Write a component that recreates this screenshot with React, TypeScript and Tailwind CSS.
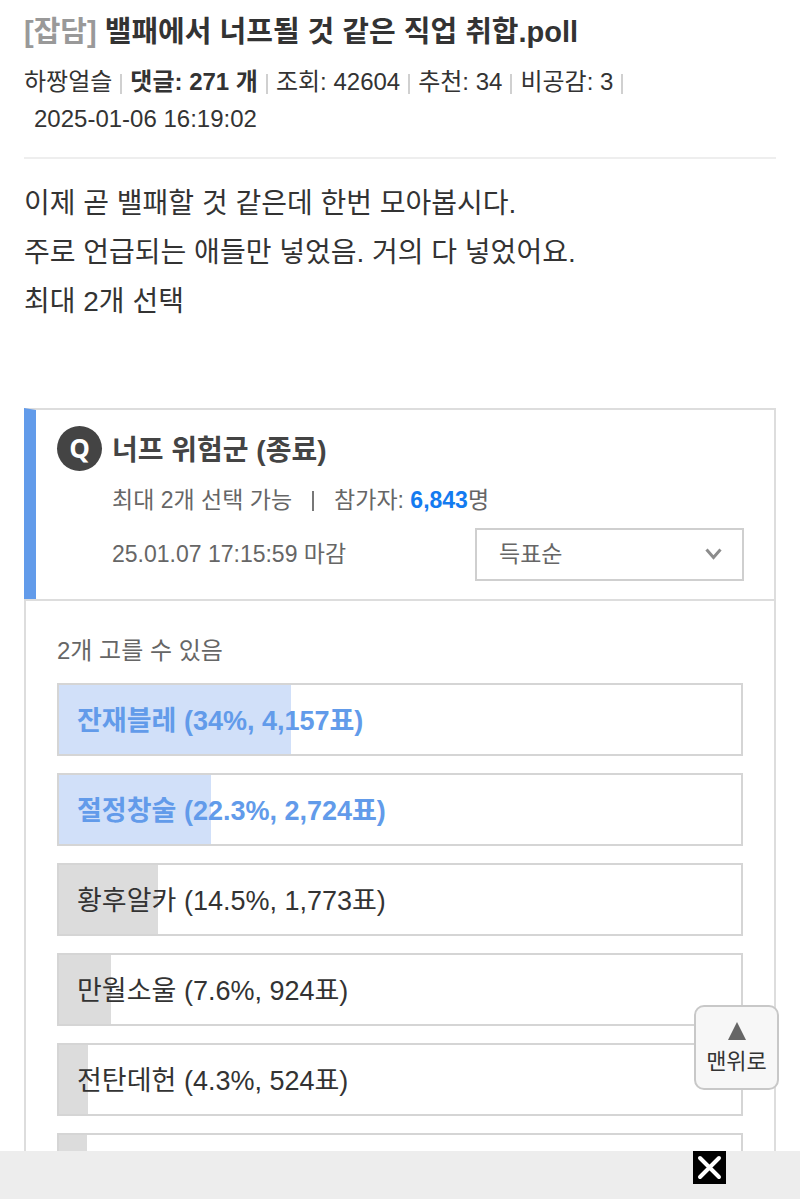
import React, { useState } from 'react';

interface PollOption {
    name: string;
    percent: number;
    votes: string;
    winner?: boolean;
}

const options: PollOption[] = [
    { name: '잔재블레', percent: 34, votes: '4,157', winner: true },
    { name: '절정창술', percent: 22.3, votes: '2,724', winner: true },
    { name: '황후알카', percent: 14.5, votes: '1,773' },
    { name: '만월소울', percent: 7.6, votes: '924' },
    { name: '전탄데헌', percent: 4.3, votes: '524' },
    { name: '', percent: 4.1, votes: '' },
];

function Divider() {
    return <span className="w-[2px] h-5 mx-2 mt-1 bg-[#d0d0d0]" />;
}

function PostHeader() {
    return (
        <header className="border-b-2 border-[#eeeeee] pt-[9px] pb-5">
            <h1 className="text-[29px] leading-[46px] font-bold">
                <span className="text-[#999999]">[잡담]</span> 밸패에서 너프될 것 같은 직업 취합.poll
            </h1>
            <div className="mt-2 flex flex-wrap items-center text-[24px] leading-[37px]">
                <span>하짱얼슬</span>
                <Divider />
                <strong className="font-bold">댓글: 271 개</strong>
                <Divider />
                <span>조회: 42604</span>
                <Divider />
                <span>추천: 34</span>
                <Divider />
                <span>비공감: 3</span>
                <Divider />
                <time className="w-full pl-[10px]">2025-01-06 16:19:02</time>
            </div>
        </header>
    );
}

function PollRow({ option }: { option: PollOption }) {
    return (
        <li className="relative h-[73px] border-2 border-[#d5d5d5] bg-white">
            <div
                className={option.winner ? 'absolute inset-y-0 left-0 bg-[#d1e0f9]' : 'absolute inset-y-0 left-0 bg-[#dcdcdc]'}
                style={{ width: `${option.percent}%` }}
            />
            {option.name && (
                <span
                    className={
                        option.winner
                            ? 'relative flex h-full items-center pt-1 pl-[18px] text-[27px] font-bold text-[#629bea]'
                            : 'relative flex h-full items-center pt-1 pl-[18px] text-[27px] text-[#333333]'
                    }
                >
                    {option.name} ({option.percent}%, {option.votes}표)
                </span>
            )}
        </li>
    );
}

function Poll() {
    const [order, setOrder] = useState('votes');

    return (
        <section className="mt-[82px]">
            <div className="border-t-2 border-r-2 border-l-[12px] border-t-[#dddddd] border-r-[#dddddd] border-l-[#629bea] pt-[14px] pr-[30px] pb-[18px] pl-[21px]">
                <div className="flex items-center gap-[10px]">
                    <span className="flex h-[45px] w-[45px] items-center justify-center rounded-full bg-[#444444] font-['Open_Sans',sans-serif] text-[26px] font-bold text-white">
                        Q
                    </span>
                    <h2 className="pt-1 text-[28px] leading-[45px] font-bold text-[#444444]">너프 위험군 (종료)</h2>
                </div>
                <div className="mt-[9px] flex items-center pl-[55px] text-[23px] leading-[37px] text-[#666666]">
                    <span>최대 2개 선택 가능</span>
                    <span className="mx-5 h-5 w-[2px] bg-[#777777]" />
                    <span>
                        참가자: <strong className="font-bold text-[#147bf0]">6,843</strong>명
                    </span>
                </div>
                <div className="mt-[9px] flex items-center justify-between pl-[55px] text-[23px] text-[#666666]">
                    <span>25.01.07 17:15:59 마감</span>
                    <div className="relative w-[269px]">
                        <select
                            aria-label="정렬"
                            value={order}
                            onChange={(e) => setOrder(e.target.value)}
                            className="block h-[53px] w-full appearance-none rounded-none border-2 border-[#cfcfcf] bg-white pl-[22px] text-[23px] leading-[37px] text-[#666666]"
                        >
                            <option value="votes">득표순</option>
                            <option value="default">등록순</option>
                        </select>
                        <svg
                            className="pointer-events-none absolute top-5 right-[22px] h-3 w-[17px]"
                            viewBox="0 0 17 12"
                            fill="none"
                            stroke="#8c8c8c"
                            strokeWidth="3"
                        >
                            <path d="M1.5 1.5 8.5 9.5 15.5 1.5" />
                        </svg>
                    </div>
                </div>
            </div>
            <div className="border-2 border-[#dddddd] px-[31px] pt-[31px] pb-8">
                <p className="text-[24px] leading-[37px] text-[#666666]">2개 고를 수 있음</p>
                <ul className="mt-[14px] flex flex-col gap-[17px]">
                    {options.map((option) => (
                        <PollRow key={option.percent} option={option} />
                    ))}
                </ul>
            </div>
        </section>
    );
}

export default function App() {
    return (
        <div className="relative flex h-screen flex-col bg-white font-['Liberation_Sans','Noto_Sans_CJK_KR',sans-serif] text-[#333333]">
            <main className="min-h-0 flex-1 overflow-hidden px-6">
                <PostHeader />
                <div className="mt-5 text-[28px] leading-[49px]">
                    <p>이제 곧 밸패할 것 같은데 한번 모아봅시다.</p>
                    <p>주로 언급되는 애들만 넣었음. 거의 다 넣었어요.</p>
                    <p>최대 2개 선택</p>
                </div>
                <Poll />
            </main>

            <footer className="flex h-12 shrink-0 items-start justify-end bg-[#ededed] pr-[74px]">
                <button type="button" aria-label="닫기" className="h-[33px] w-[33px] bg-black">
                    <svg viewBox="0 0 33 33" fill="none" stroke="#ffffff" strokeWidth="4" strokeLinecap="round">
                        <path d="M7 7 26 26M26 7 7 26" />
                    </svg>
                </button>
            </footer>

            <a
                href="#root"
                className="absolute right-[21px] bottom-[109px] flex h-[85px] w-[85px] flex-col items-center justify-center gap-[6px] rounded-[10px] border-2 border-[#c8c8c8] bg-[#f7f7f7] text-[22px] leading-[32px]"
            >
                <svg className="mt-1 h-[18px] w-[18px]" viewBox="0 0 18 18" fill="#666666">
                    <path d="M9 0 18 18H0Z" />
                </svg>
                맨위로
            </a>
        </div>
    );
}
